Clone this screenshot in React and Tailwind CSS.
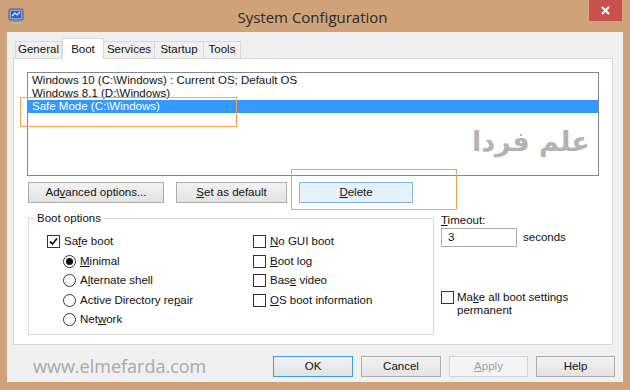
import React from 'react';

const ui = { fontFamily: '"Liberation Sans", Arial, sans-serif' };

function Check({ checked }) {
  return (
    <span className="w-[13px] h-[13px] border border-[#333] bg-white flex items-center justify-center shrink-0">
      {checked && (
        <svg width="9" height="9" viewBox="0 0 9 9">
          <path d="M1 4.5 L3.5 7 L8 1.5" fill="none" stroke="#111" strokeWidth="1.8" />
        </svg>
      )}
    </span>
  );
}

function Radio({ checked }) {
  return (
    <span className="w-[13px] h-[13px] rounded-full border border-[#333] bg-white flex items-center justify-center shrink-0">
      {checked && <span className="w-[7px] h-[7px] rounded-full bg-[#111]" />}
    </span>
  );
}

function Btn({ children, w, variant }) {
  const styles = {
    normal: 'border-[#acacac] bg-gradient-to-b from-[#f2f2f2] to-[#e3e3e3] text-[#111]',
    hover: 'border-[#7eb4ea] bg-[#e5f1fb] text-[#111]',
    def: 'border-[#3c9af0] bg-gradient-to-b from-[#f2f2f2] to-[#e3e3e3] text-[#111]',
    disabled: 'border-[#d5d5d5] bg-[#f4f4f4] text-[#a0a0a0]',
  };
  return (
    <div className={`h-[21px] border flex items-center justify-center text-[11.5px] ${styles[variant || 'normal']} ${w}`}>
      <span>{children}</span>
    </div>
  );
}

function Option({ control, children, indent }) {
  return (
    <div className={`h-[19.5px] flex items-center gap-[4px] ${indent || ''}`}>
      {control}
      <span className="text-[11.5px] text-[#111] leading-none">{children}</span>
    </div>
  );
}

export default function App() {
  return (
    <div className="w-[630px] h-[390px] bg-[#cfa27a] flex flex-col overflow-hidden" style={ui}>
      {/* title bar */}
      <div className="h-[32px] flex items-start relative">
        <div className="pl-[8px] pt-[8px]">
          <svg width="16" height="17" viewBox="0 0 16 17">
            <rect x="1" y="1" width="14" height="11" rx="1" fill="#8ea0c8" stroke="#4d5a86" />
            <rect x="3" y="3" width="10" height="7" fill="#2f5fd8" />
            <path d="M4 8 L7 5 L9 7 L12 4" stroke="#dfe8ff" strokeWidth="1.2" fill="none" />
            <rect x="5" y="12" width="6" height="2" fill="#8a8a8a" />
            <rect x="3" y="14" width="10" height="2" rx="1" fill="#b5b5b5" />
          </svg>
        </div>
        <div className="flex-1 text-center pt-[6px] text-[15px] text-[#2a2a2a] pl-[12px]" style={{ fontFamily: '"Open Sans", "Noto Sans", sans-serif' }}>
          System Configuration
        </div>
        <div className="w-[33px] h-[21px] bg-[#c8504f] mr-[8px] flex items-center justify-center">
          <svg width="9" height="9" viewBox="0 0 9 9">
            <path d="M1 1 L8 8 M8 1 L1 8" stroke="#fff" strokeWidth="2" />
          </svg>
        </div>
      </div>

      {/* client area */}
      <div className="mx-[7px] h-[350px] bg-[#f0f0f0] flex flex-col relative">
        {/* tabs */}
        <div className="h-[20px] mt-[6px] ml-[8px] flex items-end text-[11.5px] text-[#111] relative z-10">
          <div className="w-[47px] h-[17px] border border-b-0 border-[#d9d9d9] flex items-center justify-center">General</div>
          <div className="w-[42px] h-[21px] -mb-px bg-white border border-b-0 border-[#d9d9d9] flex items-start justify-center pt-[2px]">Boot</div>
          <div className="w-[51px] h-[17px] border border-b-0 border-l-0 border-[#d9d9d9] flex items-center justify-center">Services</div>
          <div className="w-[49px] h-[17px] border border-b-0 border-l-0 border-[#d9d9d9] flex items-center justify-center">Startup</div>
          <div className="w-[37px] h-[17px] border border-b-0 border-l-0 border-[#d9d9d9] flex items-center justify-center">Tools</div>
        </div>

        {/* panel */}
        <div className="ml-[6px] w-[600px] h-[287px] bg-white border border-[#d9d9d9] pl-[13px] pt-[13px] flex flex-col">
          <div className="w-[572px] h-[104px] border border-[#828790] bg-white text-[11.5px] text-[#111] flex flex-col pt-px">
            <div className="h-[13px] leading-[13px] pl-[4px]">Windows 10 (C:\Windows) : Current OS; Default OS</div>
            <div className="h-[13px] leading-[13px] pl-[4px]">Windows 8.1 (D:\Windows)</div>
            <div className="h-[13px] leading-[13px] pl-[4px] bg-[#3399ff] text-white">Safe Mode (C:\Windows)</div>
          </div>

          <div className="mt-[6px] flex gap-[12px] ml-px">
            <Btn w="w-[136px]">Ad<u>v</u>anced options...</Btn>
            <Btn w="w-[111px]"><u>S</u>et as default</Btn>
            <Btn w="w-[114px]" variant="hover"><u>D</u>elete</Btn>
          </div>

          <div className="mt-[8px] flex">
            <fieldset className="w-[406px] h-[124px] border border-[#d9d9d9] ml-px px-[18px]">
              <legend className="text-[11.5px] text-[#111] leading-[14px] px-[2px] ml-[-12px]">Boot options</legend>
              <div className="flex pt-[7px]">
                <div className="w-[206px] flex flex-col">
                  <Option control={<Check checked />}>Sa<u>f</u>e boot</Option>
                  <Option control={<Radio checked />} indent="pl-[16px]"><u>M</u>inimal</Option>
                  <Option control={<Radio />} indent="pl-[16px]">A<u>l</u>ternate shell</Option>
                  <Option control={<Radio />} indent="pl-[16px]">Active Directory re<u>p</u>air</Option>
                  <Option control={<Radio />} indent="pl-[16px]">Net<u>w</u>ork</Option>
                </div>
                <div className="flex flex-col">
                  <Option control={<Check />}><u>N</u>o GUI boot</Option>
                  <Option control={<Check />}><u>B</u>oot log</Option>
                  <Option control={<Check />}>Bas<u>e</u> video</Option>
                  <Option control={<Check />}><u>O</u>S boot information</Option>
                </div>
              </div>
            </fieldset>

            <div className="ml-[7px] flex flex-col text-[11.5px] text-[#111]">
              <div className="leading-[14px] pt-[2px]"><u>T</u>imeout:</div>
              <div className="mt-[1px] flex items-center gap-[6px]">
                <div className="w-[76px] h-[19px] border border-[#abadb3] bg-white pl-[6px] flex items-center">3</div>
                <span>seconds</span>
              </div>
              <div className="mt-[44px] flex items-start gap-[3px]">
                <Check />
                <div className="leading-[13px]">Ma<u>k</u>e all boot settings<br />permanent</div>
              </div>
            </div>
          </div>
        </div>

        {/* bottom row */}
        <div className="mt-[8px] flex items-center pr-[8px]">
          <div className="pl-[26px] flex-1 text-[18px] text-[#a9a9a9]" style={{ fontFamily: '"Open Sans", "Noto Sans", sans-serif' }}>
            www.elmefarda.com
          </div>
          <div className="flex gap-[8px]">
            <Btn w="w-[80px]" variant="def">OK</Btn>
            <Btn w="w-[80px]">Cancel</Btn>
            <Btn w="w-[79px]" variant="disabled"><u>A</u>pply</Btn>
            <Btn w="w-[79px]">Help</Btn>
          </div>
        </div>

        {/* annotations */}
        <div className="absolute left-[13px] top-[65px] w-[217px] h-[30px] border border-[#f5a25c]" />
        <div className="absolute left-[284px] top-[137px] w-[166px] h-[41px] border border-[#f5a25c]" />
        <div dir="rtl" className="absolute left-[465px] top-[96px] text-[27px] font-bold text-[#b3b3b3] leading-none" style={{ fontFamily: '"DejaVu Sans", sans-serif' }}>
          علم فردا
        </div>
      </div>
    </div>
  );
}
